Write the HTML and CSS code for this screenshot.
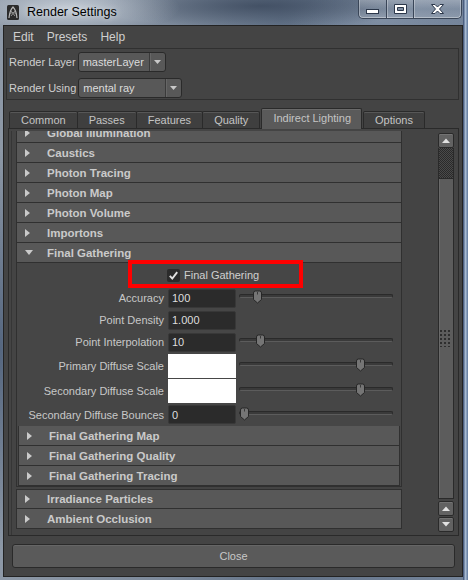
FILE: index.html
```html
<!DOCTYPE html>
<html>
<head>
<meta charset="utf-8">
<title>Render Settings</title>
<link rel="stylesheet" href="styles.css">
</head>
<body>
<div class="window">
  <div class="titlebar">
    <svg class="app-icon" width="12" height="15" viewBox="0 0 12 15">
      <rect x="0" y="0" width="12" height="15" rx="1.5" fill="#2b2b2b"/>
      <path d="M2 13 C2.5 8 4 4 6 2 C8 4 9.5 8 10 13" fill="none" stroke="#b8b8b8" stroke-width="1.2"/>
      <path d="M3 9 C5 7 7 7 9 9 M4 6 L8 11 M8 6 L4 11" fill="none" stroke="#9a9a9a" stroke-width="0.9"/>
    </svg>
    <span class="title">Render Settings</span>
    <div class="caption-buttons">
      <div class="cap cap-min">
        <svg width="13" height="5" viewBox="0 0 13 5"><rect x="0.5" y="0.5" width="12" height="4" fill="#fff" stroke="#2b374a"/></svg>
      </div>
      <div class="cap cap-max">
        <svg width="13" height="10" viewBox="0 0 13 10"><path d="M0.5 0.5 H12.5 V9.5 H0.5 Z M3.5 3.5 V6.5 H9.5 V3.5 Z" fill="#fff" fill-rule="evenodd" stroke="#2b374a"/></svg>
      </div>
      <div class="cap cap-close">
        <svg width="13" height="10" viewBox="0 0 13 10"><path d="M0.5 0.5 H4 L6.5 3 L9 0.5 H12.5 L8.5 5 L12.5 9.5 H9 L6.5 7 L4 9.5 H0.5 L4.5 5 Z" fill="#fff" stroke="#2b374a" stroke-linejoin="round"/></svg>
      </div>
    </div>
  </div>

  <div class="client">
    <div class="menubar">
      <span class="menu">Edit</span>
      <span class="menu">Presets</span>
      <span class="menu">Help</span>
    </div>

    <div class="layerbox">
      <div class="lrow">
        <span class="llabel">Render Layer</span>
        <div class="combo combo-layer">
          <span class="combo-text">masterLayer</span>
          <span class="combo-arrow"><svg width="7" height="4" viewBox="0 0 7 4"><path d="M0 0 H7 L3.5 4 Z" fill="#c8c8c8"/></svg></span>
        </div>
      </div>
      <div class="lrow">
        <span class="llabel">Render Using</span>
        <div class="combo combo-using">
          <span class="combo-text">mental ray</span>
          <span class="combo-arrow"><svg width="7" height="4" viewBox="0 0 7 4"><path d="M0 0 H7 L3.5 4 Z" fill="#c8c8c8"/></svg></span>
        </div>
      </div>
    </div>

    <div class="tabs">
      <div class="tab">Common</div>
      <div class="tab">Passes</div>
      <div class="tab">Features</div>
      <div class="tab">Quality</div>
      <div class="tab active">Indirect Lighting</div>
      <div class="tab">Options</div>
    </div>

    <div class="panel">
      <div class="view">
        <div class="list">
          <div class="hdr"><svg class="tri" width="5" height="8" viewBox="0 0 5 8"><path d="M0 0 L5 4 L0 8 Z"/></svg><span>Global Illumination</span></div>
          <div class="hdr"><svg class="tri" width="5" height="8" viewBox="0 0 5 8"><path d="M0 0 L5 4 L0 8 Z"/></svg><span>Caustics</span></div>
          <div class="hdr"><svg class="tri" width="5" height="8" viewBox="0 0 5 8"><path d="M0 0 L5 4 L0 8 Z"/></svg><span>Photon Tracing</span></div>
          <div class="hdr"><svg class="tri" width="5" height="8" viewBox="0 0 5 8"><path d="M0 0 L5 4 L0 8 Z"/></svg><span>Photon Map</span></div>
          <div class="hdr"><svg class="tri" width="5" height="8" viewBox="0 0 5 8"><path d="M0 0 L5 4 L0 8 Z"/></svg><span>Photon Volume</span></div>
          <div class="hdr"><svg class="tri" width="5" height="8" viewBox="0 0 5 8"><path d="M0 0 L5 4 L0 8 Z"/></svg><span>Importons</span></div>
          <div class="hdr open"><svg class="tri-down" width="8" height="6" viewBox="0 0 8 6"><path d="M0 0 H8 L4 5 Z"/></svg><span>Final Gathering</span></div>

          <div class="fgbody">
            <div class="annot"></div>
            <div class="row row-check">
              <span class="lbl spacer"></span>
              <span class="checkbox"><svg width="13" height="13" viewBox="0 0 13 13"><path d="M2.8 6.8 L5.3 9.6 L10.2 3.2" fill="none" stroke="#e2e2e2" stroke-width="1.9"/></svg></span>
              <span class="check-label">Final Gathering</span>
            </div>
            <div class="row row-field">
              <span class="lbl">Accuracy</span>
              <span class="field">100</span>
              <div class="slider"><span class="thumb" style="left:13px"><svg width="11" height="14" viewBox="0 0 11 14"><path d="M1.5 3 Q1.5 1 3.5 1 H7.5 Q9.5 1 9.5 3 V9.5 L5.5 13 L1.5 9.5 Z" fill="#757575" stroke="#262626"/><path d="M5.5 2 V4.5" stroke="#3a3a3a"/></svg></span></div>
            </div>
            <div class="row row-field">
              <span class="lbl">Point Density</span>
              <span class="field">1.000</span>
            </div>
            <div class="row row-field">
              <span class="lbl">Point Interpolation</span>
              <span class="field">10</span>
              <div class="slider"><span class="thumb" style="left:16px"><svg width="11" height="14" viewBox="0 0 11 14"><path d="M1.5 3 Q1.5 1 3.5 1 H7.5 Q9.5 1 9.5 3 V9.5 L5.5 13 L1.5 9.5 Z" fill="#757575" stroke="#262626"/><path d="M5.5 2 V4.5" stroke="#3a3a3a"/></svg></span></div>
            </div>
            <div class="row row-swatch">
              <span class="lbl">Primary Diffuse Scale</span>
              <span class="swatch"></span>
              <div class="slider"><span class="thumb" style="left:116px"><svg width="11" height="14" viewBox="0 0 11 14"><path d="M1.5 3 Q1.5 1 3.5 1 H7.5 Q9.5 1 9.5 3 V9.5 L5.5 13 L1.5 9.5 Z" fill="#757575" stroke="#262626"/><path d="M5.5 2 V4.5" stroke="#3a3a3a"/></svg></span></div>
            </div>
            <div class="row row-swatch">
              <span class="lbl">Secondary Diffuse Scale</span>
              <span class="swatch"></span>
              <div class="slider"><span class="thumb" style="left:116px"><svg width="11" height="14" viewBox="0 0 11 14"><path d="M1.5 3 Q1.5 1 3.5 1 H7.5 Q9.5 1 9.5 3 V9.5 L5.5 13 L1.5 9.5 Z" fill="#757575" stroke="#262626"/><path d="M5.5 2 V4.5" stroke="#3a3a3a"/></svg></span></div>
            </div>
            <div class="row row-field row-last">
              <span class="lbl">Secondary Diffuse Bounces</span>
              <span class="field">0</span>
              <div class="slider"><span class="thumb" style="left:0px"><svg width="11" height="14" viewBox="0 0 11 14"><path d="M1.5 3 Q1.5 1 3.5 1 H7.5 Q9.5 1 9.5 3 V9.5 L5.5 13 L1.5 9.5 Z" fill="#757575" stroke="#262626"/><path d="M5.5 2 V4.5" stroke="#3a3a3a"/></svg></span></div>
            </div>
            <div class="hdr sub"><svg class="tri" width="5" height="8" viewBox="0 0 5 8"><path d="M0 0 L5 4 L0 8 Z"/></svg><span>Final Gathering Map</span></div>
            <div class="hdr sub"><svg class="tri" width="5" height="8" viewBox="0 0 5 8"><path d="M0 0 L5 4 L0 8 Z"/></svg><span>Final Gathering Quality</span></div>
            <div class="hdr sub"><svg class="tri" width="5" height="8" viewBox="0 0 5 8"><path d="M0 0 L5 4 L0 8 Z"/></svg><span>Final Gathering Tracing</span></div>
          </div>

          <div class="hdr after"><svg class="tri" width="5" height="8" viewBox="0 0 5 8"><path d="M0 0 L5 4 L0 8 Z"/></svg><span>Irradiance Particles</span></div>
          <div class="hdr"><svg class="tri" width="5" height="8" viewBox="0 0 5 8"><path d="M0 0 L5 4 L0 8 Z"/></svg><span>Ambient Occlusion</span></div>
        </div>
      </div>

      <div class="scrollbar">
        <div class="sb-btn"><svg width="8" height="5" viewBox="0 0 8 5"><path d="M0 5 L4 0.5 L8 5 Z" fill="#e2e2e2"/></svg></div>
        <div class="sb-page"></div>
        <div class="sb-thumb"><span class="grip"></span></div>
        <div class="sb-btn sb-low"><svg width="8" height="5" viewBox="0 0 8 5"><path d="M0 5 L4 0.5 L8 5 Z" fill="#e2e2e2"/></svg></div>
        <div class="sb-btn sb-down"><svg width="8" height="5" viewBox="0 0 8 5"><path d="M0 0 H8 L4 4.5 Z" fill="#e2e2e2"/></svg></div>
      </div>
    </div>

    <div class="closebtn">Close</div>
  </div>
</div>
</body>
</html>
```

FILE: styles.css
```css
html, body {
  margin: 0;
  padding: 0;
}

body {
  width: 468px;
  height: 580px;
  overflow: hidden;
  font-family: "Liberation Sans", Arial, sans-serif;
  font-size: 11px;
  color: #c8c8c8;
  background:
    linear-gradient(90deg, transparent 463px, #34476a 463px, #a7bad2 465.5px, #5d7699 468px),
    radial-gradient(ellipse 110px 28px at 70px 8px, rgba(215,222,230,0.75), rgba(215,222,230,0) 100%),
    radial-gradient(ellipse 160px 22px at 260px 6px, rgba(55,68,88,0.75), rgba(55,68,88,0) 100%),
    radial-gradient(ellipse 90px 30px at 380px 20px, rgba(140,155,175,0.6), rgba(140,155,175,0) 100%),
    radial-gradient(ellipse 14px 200px at 1px 350px, rgba(60,80,110,0.7), rgba(60,80,110,0) 100%),
    linear-gradient(90deg, #8d98a6 0%, #7d8a9b 35%, #647489 60%, #74849a 100%);
}

.window {
  display: flex;
  flex-direction: column;
  height: 580px;
}

/* ---------- title bar ---------- */
.titlebar {
  height: 25px;
  flex: none;
  display: flex;
  align-items: flex-start;
}

.app-icon {
  margin: 5px 0 0 7px;
  flex: none;
}

.title {
  margin: 4px 0 0 8px;
  font-size: 12.5px;
  line-height: 16px;
  color: #000;
  text-shadow: 0 0 6px rgba(255,255,255,0.7);
}

.caption-buttons {
  margin-left: auto;
  margin-right: 6px;
  height: 18px;
  display: flex;
  border: 1px solid #3a4658;
  border-top: none;
  border-radius: 0 0 5px 5px;
  overflow: hidden;
  background: linear-gradient(rgba(255,255,255,0.28), rgba(255,255,255,0.08) 50%, rgba(255,255,255,0.16));
  box-shadow: inset 0 -1px rgba(255,255,255,0.35), inset 1px 0 rgba(255,255,255,0.3), inset -1px 0 rgba(255,255,255,0.3);
}

.cap {
  display: flex;
  align-items: center;
  justify-content: center;
}

.cap + .cap {
  border-left: 1px solid #3a4658;
  box-shadow: inset 1px 0 rgba(255,255,255,0.3);
}

.cap-min {
  width: 27px;
  padding-top: 5px;
  box-sizing: border-box;
}

.cap-max {
  width: 26px;
}

.cap-close {
  width: 47px;
}

/* ---------- client ---------- */
.client {
  flex: 1;
  margin: 0 5px 3px 3px;
  background: #444444;
  border: 1px solid #232323;
  display: flex;
  flex-direction: column;
}

.menubar {
  height: 22px;
  flex: none;
  display: flex;
  align-items: center;
  padding-left: 9px;
  font-size: 12px;
  color: #cfcfcf;
}

.menu {
  margin-right: 13px;
}

.layerbox {
  height: 52px;
  box-sizing: border-box;
  flex: none;
  margin: 0 3px 0 2px;
  border: 1px solid #303030;
  padding: 3px 2px 0;
  display: flex;
  flex-direction: column;
  gap: 6px;
}

.lrow {
  height: 20px;
  display: flex;
  align-items: center;
}

.llabel {
  margin-right: 2px;
  color: #cfcfcf;
}

.combo {
  height: 20px;
  box-sizing: border-box;
  border: 1px solid #2a2a2a;
  border-radius: 3px;
  background: #585858;
  display: flex;
  align-items: center;
  color: #dcdcdc;
}

.combo-layer {
  width: 88px;
}

.combo-using {
  width: 104px;
}

.combo-text {
  flex: 1;
  padding-left: 4px;
}

.combo-arrow {
  width: 15px;
  height: 100%;
  border-left: 1px solid #3a3a3a;
  box-shadow: inset 1px 0 #666;
  display: flex;
  align-items: center;
  justify-content: center;
}

/* ---------- tabs ---------- */
.tabs {
  height: 20px;
  flex: none;
  margin: 8px 0 0 5px;
  display: flex;
  align-items: flex-end;
}

.tab {
  height: 17px;
  box-sizing: border-box;
  padding: 0 11px;
  border: 1px solid #2a2a2a;
  border-bottom: none;
  border-radius: 2px 2px 0 0;
  background: #3f3f3f;
  box-shadow: inset 0 1px #575757;
  display: flex;
  align-items: center;
  color: #c4c4c4;
}

.tab + .tab {
  margin-left: -1px;
}

.tab.active {
  height: 21px;
  margin: 0 0 -1px 1px;
  padding: 0 10px 2px 11px;
  background: #5a5a5a;
  box-shadow: inset 0 1px #6a6a6a;
  position: relative;
  z-index: 1;
}

.tab.active + .tab {
  margin-left: 1px;
}

/* ---------- panel ---------- */
.panel {
  height: 408px;
  box-sizing: border-box;
  flex: none;
  margin: 0 3px 0 4px;
  border: 1px solid #2a2a2a;
  padding-right: 4px;
  display: flex;
}

.view {
  flex: 1;
  overflow: hidden;
  margin: 2px 0 0 2px;
  border-left: 1px solid #363636;
  padding-left: 4px;
}

.list {
  width: 386px;
  margin-top: -8px;
}

.hdr {
  height: 20px;
  box-sizing: border-box;
  background: #585858;
  border: 1px solid #303030;
  border-top: none;
  display: flex;
  align-items: center;
  padding-left: 8px;
  font-weight: bold;
  font-size: 11.5px;
  color: #cacaca;
}

.tri {
  flex: none;
  margin-right: 17px;
  fill: #cacaca;
}

.tri-down {
  flex: none;
  margin-right: 14px;
  fill: #cacaca;
}

.hdr.sub {
  margin: 0 1px;
  padding-left: 8px;
}

.hdr.after {
  margin-top: 2px;
  border-top: 1px solid #303030;
}

.fgbody {
  position: relative;
  background: #464646;
  border: 1px solid #303030;
  border-top: none;
}

.annot {
  position: absolute;
  left: 111px;
  top: -3px;
  width: 175px;
  height: 28px;
  box-sizing: border-box;
  border: 4px solid #ff0000;
}

.row {
  display: flex;
  align-items: center;
}

.row-check {
  height: 24px;
}

.row-field {
  height: 22px;
}

.row-swatch {
  height: 25px;
}

.row-last {
  height: 23px;
}

.lbl {
  width: 147px;
  flex: none;
  text-align: right;
  margin-right: 4px;
  color: #c8c8c8;
  white-space: nowrap;
}

.lbl.spacer {
  margin-right: 3px;
}

.checkbox {
  width: 13px;
  height: 13px;
  background: #2b2b2b;
  border-radius: 2px;
  display: flex;
}

.check-label {
  margin-left: 4px;
  color: #d0d0d0;
}

.field {
  width: 68px;
  height: 19px;
  box-sizing: border-box;
  flex: none;
  background: #2b2b2b;
  border: 1px solid #383838;
  border-radius: 2px;
  padding-left: 3px;
  display: flex;
  align-items: center;
  color: #dedede;
}

.swatch {
  width: 68px;
  height: 24px;
  flex: none;
  background: #ffffff;
}

.slider {
  position: relative;
  width: 154px;
  height: 14px;
  margin: 0 0 2px 3px;
}

.slider::before {
  content: "";
  position: absolute;
  left: 0;
  right: 0;
  top: 4px;
  height: 4px;
  box-sizing: border-box;
  background: #3a3a3a;
  border: 1px solid #2a2a2a;
  border-bottom-color: #5c5c5c;
  border-radius: 2px;
}

.thumb {
  position: absolute;
  top: 0;
  width: 11px;
  height: 14px;
  display: flex;
}

/* ---------- scrollbar ---------- */
.scrollbar {
  width: 16px;
  flex: none;
  margin: 4px 0 3px;
  display: flex;
  flex-direction: column;
}

.sb-btn {
  height: 15px;
  flex: none;
  box-sizing: border-box;
  border: 1px solid #2a2a2a;
  border-radius: 2px;
  background: #626262;
  box-shadow: inset 0 1px #737373;
  display: flex;
  align-items: center;
  justify-content: center;
}

.sb-low {
  margin-top: 2px;
}

.sb-down {
  margin-top: 1px;
}

.sb-page {
  height: 30px;
  flex: none;
  box-sizing: border-box;
  border-left: 1px solid #2a2a2a;
  border-right: 1px solid #2a2a2a;
  background-color: #303030;
  background-image: conic-gradient(#2a2a2a 25%, #4a4a4a 0 50%, #2a2a2a 0 75%, #4a4a4a 0);
  background-size: 2px 2px;
}

.sb-thumb {
  flex: 1;
  box-sizing: border-box;
  background: #5c5c5c;
  border: 1px solid #2a2a2a;
  box-shadow: inset 1px 0 #6a6a6a;
  display: flex;
  justify-content: center;
}

.grip {
  width: 12px;
  height: 17px;
  margin-top: 151px;
  background-image: radial-gradient(circle at 1px 1px, #2e2e2e 1px, transparent 1.2px);
  background-size: 4px 4px;
}

/* ---------- close button ---------- */
.closebtn {
  height: 24px;
  box-sizing: border-box;
  flex: none;
  margin: 8px 7px 0 8px;
  border: 1px solid #2a2a2a;
  border-radius: 3px;
  background: #5a5a5a;
  box-shadow: inset 0 1px #666;
  display: flex;
  align-items: center;
  justify-content: center;
  color: #c8c8c8;
}
```
